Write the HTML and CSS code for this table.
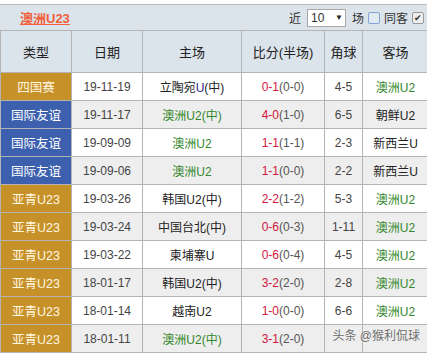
FILE: index.html
```html
<!DOCTYPE html>
<html>
<head>
<meta charset="utf-8">
<link rel="stylesheet" href="styles.css">
</head>
<body>
<div class="page">
  <div class="titlebar">
    <a class="title">澳洲U23</a>
    <div class="controls">
      <span>近</span>
      <span class="select">10 <span class="arrow">▼</span></span>
      <span>场</span>
      <span class="cb"></span>
      <span>同客</span>
      <span class="cb checked">✔</span>
      <span>同</span>
    </div>
  </div>
  <table class="games">
    <colgroup>
      <col class="c1"><col class="c2"><col class="c3"><col class="c4"><col class="c5"><col class="c6">
    </colgroup>
    <thead>
      <tr><th>类型</th><th>日期</th><th>主场</th><th>比分(半场)</th><th>角球</th><th>客场</th></tr>
    </thead>
    <tbody>
      <tr><td class="t gold">四国赛</td><td>19-11-19</td><td>立陶宛<span class="u">U</span>(中)</td><td><span class="s">0-1</span>(0-0)</td><td class="k">4-5</td><td class="g">澳洲U2</td></tr>
      <tr class="alt"><td class="t blue">国际友谊</td><td>19-11-17</td><td class="g">澳洲U2(中)</td><td><span class="s">4-0</span>(1-0)</td><td class="k">6-5</td><td>朝鲜U2</td></tr>
      <tr><td class="t blue">国际友谊</td><td>19-09-09</td><td class="g">澳洲U2</td><td><span class="s">1-1</span>(1-1)</td><td class="k">2-3</td><td>新西兰U</td></tr>
      <tr class="alt"><td class="t blue">国际友谊</td><td>19-09-06</td><td class="g">澳洲U2</td><td><span class="s">1-1</span>(0-0)</td><td class="k">2-2</td><td>新西兰U</td></tr>
      <tr><td class="t gold">亚青U23</td><td>19-03-26</td><td>韩国U2(中)</td><td><span class="s">2-2</span>(1-2)</td><td class="k">5-3</td><td class="g">澳洲U2</td></tr>
      <tr class="alt"><td class="t gold">亚青U23</td><td>19-03-24</td><td>中国台北(中)</td><td><span class="s">0-6</span>(0-3)</td><td class="k">1-11</td><td class="g">澳洲U2</td></tr>
      <tr><td class="t gold">亚青U23</td><td>19-03-22</td><td>柬埔寨U</td><td><span class="s">0-6</span>(0-4)</td><td class="k">4-5</td><td class="g">澳洲U2</td></tr>
      <tr class="alt"><td class="t gold">亚青U23</td><td>18-01-17</td><td>韩国U2(中)</td><td><span class="s">3-2</span>(2-0)</td><td class="k">2-8</td><td class="g">澳洲U2</td></tr>
      <tr><td class="t gold">亚青U23</td><td>18-01-14</td><td>越南U2</td><td><span class="s">1-0</span>(0-0)</td><td class="k">6-6</td><td class="g">澳洲U2</td></tr>
      <tr class="alt"><td class="t gold">亚青U23</td><td>18-01-11</td><td class="g">澳洲U2(中)</td><td><span class="s">3-1</span>(2-0)</td><td class="k"></td><td></td></tr>
    </tbody>
  </table>
  <div class="watermark">头条 @猴利侃球</div>
</div>
</body>
</html>
```

FILE: styles.css
```css
html, body {
  margin: 0;
  padding: 0;
  background: #fff;
  overflow: hidden;
}
body {
  font-family: "Liberation Sans", "Noto Sans CJK SC", sans-serif;
  font-size: 12px;
  color: #333;
}
.page {
  position: relative;
  width: 428px;
  padding-top: 4px;
}
.titlebar {
  height: 25px;
  border-top: 1px solid #b8bcc0;
  background: #dbe3eb;
  display: flex;
  align-items: center;
  justify-content: space-between;
  padding-left: 20px;
}
.title {
  color: #f0603a;
  font-weight: bold;
  font-size: 13px;
  text-decoration: underline;
}
.controls {
  display: flex;
  align-items: center;
  gap: 4px;
  font-size: 12px;
  color: #333;
  margin-right: -12px;
}
.select {
  display: inline-flex;
  align-items: center;
  justify-content: space-between;
  width: 32px;
  height: 16px;
  padding: 0 2px 0 3px;
  border: 1px solid #a8a8a8;
  background: #fff;
  font-size: 12px;
  margin: 0 2px;
}
.arrow {
  font-size: 8px;
  color: #222;
}
.cb {
  display: inline-block;
  width: 10px;
  height: 10px;
  border: 1px solid #7fa3d4;
  border-radius: 2px;
  background: #e2e9f2;
  font-size: 9px;
  line-height: 10px;
  text-align: center;
  color: #333;
}
.cb.checked {
  border-color: #999;
  background: #eee;
}
.games {
  border-collapse: collapse;
  table-layout: fixed;
  width: 428px;
}
.c1 { width: 71px; }
.c2 { width: 71px; }
.c3 { width: 99px; }
.c4 { width: 83px; }
.c5 { width: 38px; }
.c6 { width: 66px; }
.games th, .games td {
  border: 1px solid #b4b4b4;
  text-align: center;
  white-space: nowrap;
  overflow: hidden;
  padding: 0;
}
.games th {
  background: #dbe3eb;
  height: 41px;
  font-weight: normal;
  font-size: 13px;
  color: #222;
}
.games td {
  height: 27px;
  font-size: 12px;
  color: #222;
}
.games tr.alt td {
  background: #eeeeee;
}
.games td:nth-child(2) { color: #444; }
.games td.t {
  color: #fff;
  font-size: 12.5px;
}
.games tr td.gold { background: #c7912a; color: #fff7e0; }
.games tr td.blue { background: #3c5fae; }
.games td.g { color: #33872b; }
.games td.k { color: #444; }
.games td:nth-child(4) { color: #555; }
.s { color: #d0163c; }
.u { color: #2a2a88; }
.watermark {
  position: absolute;
  right: 8px;
  bottom: 10px;
  font-size: 12px;
  color: #555;
  text-shadow: 0 0 2px #fff;
  opacity: 0.85;
}
```
